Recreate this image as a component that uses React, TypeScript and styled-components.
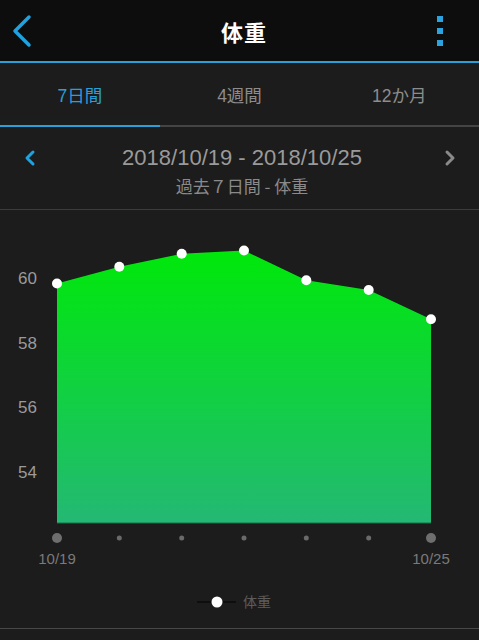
import styled, { createGlobalStyle } from "styled-components";

const GlobalStyle = createGlobalStyle`
  *, *::before, *::after {
    box-sizing: border-box;
  }
  html, body {
    margin: 0;
    padding: 0;
    background-color: #1c1c1c;
  }
  body {
    font-family: "Liberation Sans", "Noto Sans CJK JP", sans-serif;
  }
`;

type Tab = {
  label: string;
};

const tabs: Tab[] = [{ label: "7日間" }, { label: "4週間" }, { label: "12か月" }];

const weights = [59.83, 60.35, 60.75, 60.85, 59.93, 59.63, 58.72];

const Page = styled.div`
  width: 479px;
  height: 640px;
  background-color: #1c1c1c;
  display: flex;
  flex-direction: column;
  overflow: hidden;
`;

const TopBar = styled.div`
  height: 63px;
  flex-shrink: 0;
  background-color: #0d0d0d;
  border-bottom: 2px solid #2a9fd8;
  display: flex;
  align-items: center;
  justify-content: space-between;
  padding: 0 36px 0 11px;
`;

const Title = styled.div`
  color: #ffffff;
  font-family: "Noto Sans CJK JP", sans-serif;
  font-weight: 700;
  font-size: 22px;
  letter-spacing: 1px;
  padding-left: 18px;
`;

const MoreDots = styled.div`
  display: flex;
  flex-direction: column;
  gap: 6px;
  span {
    display: block;
    width: 6px;
    height: 6px;
    background-color: #2aa3e0;
  }
`;

const TabRow = styled.div`
  height: 64px;
  flex-shrink: 0;
  display: flex;
  border-bottom: 2px solid #444444;
`;

const TabItem = styled.div<{ active: boolean }>`
  flex: 1;
  display: flex;
  align-items: center;
  justify-content: center;
  padding-top: 1px;
  font-size: 17.5px;
  color: ${({ active }) => (active ? "#2b9fd9" : "#8c8c8c")};
  margin-bottom: -2px;
  border-bottom: 2px solid ${({ active }) => (active ? "#2b9fd9" : "transparent")};
`;

const DateBar = styled.div`
  height: 83px;
  flex-shrink: 0;
  display: flex;
  align-items: flex-start;
  justify-content: space-between;
  padding: 20px 22px 0 23px;
  border-bottom: 1px solid #3c3c3c;
`;

const DateInfo = styled.div`
  display: flex;
  flex-direction: column;
  align-items: center;
  gap: 7px;
  padding-left: 4px;
`;

const Range = styled.div`
  color: #9a9a9a;
  font-size: 22px;
  line-height: 22px;
`;

const Subtitle = styled.div`
  color: #8a8a8a;
  font-family: "Noto Sans CJK JP", sans-serif;
  font-size: 17px;
  line-height: 20px;
`;

const Chevron = styled.svg`
  margin-top: 2px;
`;

const ChartArea = styled.div`
  height: 419px;
  flex-shrink: 0;
  border-bottom: 1px solid #474747;
`;

const Footer = styled.div`
  flex: 1;
  background-color: #1c1c1c;
`;

const toY = (v: number) => 68 + (60 - v) * 32.25;
const xs = [57, 119.3, 181.7, 244, 306.3, 368.7, 431];

const WeightChart = () => {
  const pts = weights.map((w, i) => [xs[i], toY(w)]);
  const bottom = 313;
  const area =
    `M${xs[0]},${bottom} ` +
    pts.map(([x, y]) => `L${x},${y}`).join(" ") +
    ` L${xs[6]},${bottom} Z`;
  return (
    <svg width="479" height="418" viewBox="0 0 479 418" style={{ display: "block" }}>
      <defs>
        <linearGradient id="fillG" x1="0" y1="0" x2="0" y2="1">
          <stop offset="0" stopColor="#00e80a" />
          <stop offset="0.55" stopColor="#12cf45" />
          <stop offset="1" stopColor="#24b874" />
        </linearGradient>
      </defs>
      {[60, 58, 56, 54].map((v) => (
        <text
          key={v}
          x="18"
          y={toY(v) + 6}
          fill="#9a9a9a"
          fontSize="17"
          fontFamily="Liberation Sans, sans-serif"
        >
          {v}
        </text>
      ))}
      <path d={area} fill="url(#fillG)" />
      <line x1={xs[0]} y1={bottom} x2={xs[6]} y2={bottom} stroke="#1b6e44" strokeWidth="1" />
      {pts.map(([x, y], i) => (
        <circle key={i} cx={x} cy={y} r="5" fill="#ffffff" />
      ))}
      {xs.map((x, i) => (
        <circle
          key={i}
          cx={x}
          cy={328}
          r={i === 0 || i === 6 ? 5 : 2.5}
          fill={i === 0 || i === 6 ? "#6e6e6e" : "#6a6a6a"}
        />
      ))}
      <text x={xs[0]} y="354" fill="#7a7a7a" fontSize="15" textAnchor="middle" fontFamily="Liberation Sans, sans-serif">
        10/19
      </text>
      <text x={xs[6]} y="354" fill="#7a7a7a" fontSize="15" textAnchor="middle" fontFamily="Liberation Sans, sans-serif">
        10/25
      </text>
      <line x1="197" y1="392" x2="236" y2="392" stroke="#0e0e0e" strokeWidth="2" />
      <circle cx="217" cy="392" r="5.5" fill="#ffffff" />
      <text x="243" y="397" fill="#5c5c5c" fontSize="14" fontFamily="Noto Sans CJK JP, sans-serif">
        体重
      </text>
    </svg>
  );
};

const App = () => {
  return (
    <Page>
      <GlobalStyle />
      <TopBar>
        <svg width="22" height="34" viewBox="0 0 22 34">
          <polyline
            points="18,3 4,17 18,31"
            fill="none"
            stroke="#1fa3e0"
            strokeWidth="3.5"
            strokeLinecap="round"
            strokeLinejoin="round"
          />
        </svg>
        <Title>体重</Title>
        <MoreDots>
          <span />
          <span />
          <span />
        </MoreDots>
      </TopBar>
      <TabRow>
        {tabs.map((t, i) => (
          <TabItem key={t.label} active={i === 0}>
            {t.label}
          </TabItem>
        ))}
      </TabRow>
      <DateBar>
        <Chevron width="14" height="18" viewBox="0 0 14 18">
          <polyline
            points="10,3 4,9 10,15"
            fill="none"
            stroke="#1fa3e0"
            strokeWidth="3"
            strokeLinecap="round"
            strokeLinejoin="round"
          />
        </Chevron>
        <DateInfo>
          <Range>2018/10/19 - 2018/10/25</Range>
          <Subtitle>過去７日間 - 体重</Subtitle>
        </DateInfo>
        <Chevron width="14" height="18" viewBox="0 0 14 18">
          <polyline
            points="4,3 10,9 4,15"
            fill="none"
            stroke="#8a8a8a"
            strokeWidth="3"
            strokeLinecap="round"
            strokeLinejoin="round"
          />
        </Chevron>
      </DateBar>
      <ChartArea>
        <WeightChart />
      </ChartArea>
      <Footer />
    </Page>
  );
};

export default App;
